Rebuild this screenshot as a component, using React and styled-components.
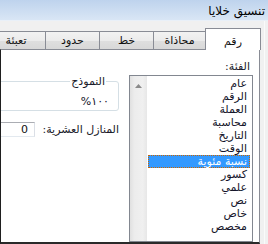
import React from 'react';
import styled, { createGlobalStyle } from 'styled-components';

const Global = createGlobalStyle`
  html, body { margin: 0; padding: 0; background: #f0f0f0; }
  #root { width: 268px; height: 244px; }
`;

const Window = styled.div`
  width: 268px;
  height: 244px;
  overflow: hidden;
  background: #f0f0f0;
  display: flex;
  flex-direction: column;
  direction: rtl;
  font-family: "DejaVu Sans", "Liberation Sans", sans-serif;
  color: #111;
`;

const TitleBar = styled.div`
  flex: none;
  height: 21px;
  box-sizing: border-box;
  padding: 2px 3px 0 0;
  background: linear-gradient(#bed3ed, #d9e6f5);
  border-bottom: 1px solid #e9f0f8;
  display: flex;
  align-items: center;
  font-size: 12px;
  color: #000;
`;

const Body = styled.div`
  flex: 1;
  min-height: 0;
  display: flex;
  flex-direction: column;
  padding: 7px 8px 0 0;
  background: linear-gradient(to left, #f0f0f0 3px, #fafafa 3px, #fafafa 4px, #f0f0f0 4px);
`;

const TabStrip = styled.div`
  flex: none;
  height: 21px;
  display: flex;
  align-items: flex-end;
  position: relative;
  z-index: 1;
  margin-right: -1px;
`;

const Tab = styled.div`
  flex: none;
  box-sizing: border-box;
  width: ${p => p.$w}px;
  height: ${p => (p.$active ? 22 : 18)}px;
  margin-bottom: ${p => (p.$active ? -1 : 0)}px;
  margin-right: ${p => (p.$active ? 0 : -1)}px;
  padding-top: ${p => (p.$active ? 3 : 0)}px;
  border: 1px solid #898c95;
  border-bottom: none;
  background: ${p =>
    p.$active ? '#ffffff' : 'linear-gradient(#f2f2f2, #ebebeb 50%, #dfdfdf 51%, #d8d8d8)'};
  display: flex;
  align-items: center;
  justify-content: center;
  font-size: 11px;
  white-space: nowrap;
`;

const Panel = styled.div`
  flex: 1;
  min-height: 0;
  background: #fff;
  border-top: 1px solid #898c95;
  border-right: 1px solid #898c95;
  border-left: 1px solid #1f1f1f;
  border-bottom: 2px solid #2a2a2a;
  display: flex;
  gap: 10px;
  padding: 10px 6px 0 0;
  overflow: hidden;
`;

const CategoryColumn = styled.div`
  flex: none;
  width: 124px;
  display: flex;
  flex-direction: column;
`;

const Label = styled.div`
  flex: none;
  height: 15px;
  line-height: 14px;
  font-size: 11px;
  padding-right: 3px;
  color: #1a1a2a;
`;

const ListBox = styled.div`
  flex: 1;
  min-height: 0;
  box-sizing: border-box;
  border: 1px solid #828790;
  display: flex;
`;

const Items = styled.div`
  flex: 1;
  padding: 1px 2px 0 1px;
`;

const Item = styled.div`
  box-sizing: border-box;
  height: 13px;
  line-height: 12px;
  font-size: 11px;
  padding-right: 2px;
  white-space: nowrap;
  color: ${p => (p.$selected ? '#fff' : '#14142a')};
  background: ${p => (p.$selected ? '#3399ff' : 'transparent')};
  border: 1px dotted ${p => (p.$selected ? '#cc6600' : 'transparent')};
`;

const ScrollBar = styled.div`
  flex: none;
  width: 17px;
  background: linear-gradient(to right, #e0e0e0, #ececec 25%, #f0f0f0 75%, #e7e7e7);
  display: flex;
  justify-content: center;
  padding-top: 8px;
  box-sizing: border-box;
`;

const OptionsColumn = styled.div`
  flex: none;
  width: 260px;
  display: flex;
  flex-direction: column;
  padding-top: 15px;
`;

const Group = styled.fieldset`
  margin: 0;
  padding: 7px 9px 2px 0;
  border: 1px solid #d5dfe5;
  border-radius: 3px;
  min-inline-size: 0;
`;

const Legend = styled.legend`
  padding: 0 1px;
  margin-right: 3px;
  font-size: 11px;
  line-height: 13px;
  color: #1a1a2a;
`;

const Sample = styled.div`
  font-size: 11px;
  line-height: 13px;
  color: #14142a;
  direction: ltr;
  unicode-bidi: bidi-override;
  text-align: right;
`;

const DecimalRow = styled.div`
  margin-top: 11px;
  display: flex;
  align-items: center;
  gap: 10px;
`;

const RowLabel = styled.div`
  flex: none;
  width: 74px;
  font-size: 11px;
  white-space: nowrap;
  color: #1a1a2a;
`;

const SpinInput = styled.div`
  flex: none;
  width: 150px;
  height: 15px;
  box-sizing: border-box;
  border: 1px solid #abadb3;
  border-bottom-color: #e3e9ef;
  border-left-color: #e2e3ea;
  border-right-color: #dbdfe6;
  display: flex;
  align-items: center;
  padding-right: 6px;
  font-family: "DejaVu Sans", sans-serif;
  font-size: 11px;
  color: #111;
`;

const categories = [
  'عام', 'الرقم', 'العملة', 'محاسبة', 'التاريخ', 'الوقت',
  'نسبة مئوية', 'كسور', 'علمي', 'نص', 'خاص', 'مخصص',
];

const tabs = [
  { label: 'رقم', w: 56, active: true },
  { label: 'محاذاة', w: 53 },
  { label: 'خط', w: 55 },
  { label: 'حدود', w: 55 },
  { label: 'تعبئة', w: 60 },
];

export default function App() {
  return (
    <>
      <Global />
      <Window>
        <TitleBar>تنسيق خلايا</TitleBar>
        <Body>
          <TabStrip>
            {tabs.map(t => (
              <Tab key={t.label} $w={t.w} $active={t.active}>{t.label}</Tab>
            ))}
          </TabStrip>
          <Panel>
            <CategoryColumn>
              <Label>الفئة:</Label>
              <ListBox>
                <Items>
                  {categories.map(c => (
                    <Item key={c} $selected={c === 'نسبة مئوية'}>{c}</Item>
                  ))}
                </Items>
                <ScrollBar>
                  <svg width="7" height="4" viewBox="0 0 7 4">
                    <path d="M3.5 0 L7 4 L0 4 Z" fill="#8a8a8a" />
                  </svg>
                </ScrollBar>
              </ListBox>
            </CategoryColumn>
            <OptionsColumn>
              <Group>
                <Legend>النموذج</Legend>
                <Sample>%١٠٠</Sample>
              </Group>
              <DecimalRow>
                <RowLabel>المنازل العشرية:</RowLabel>
                <SpinInput>0</SpinInput>
              </DecimalRow>
            </OptionsColumn>
          </Panel>
        </Body>
      </Window>
    </>
  );
}
